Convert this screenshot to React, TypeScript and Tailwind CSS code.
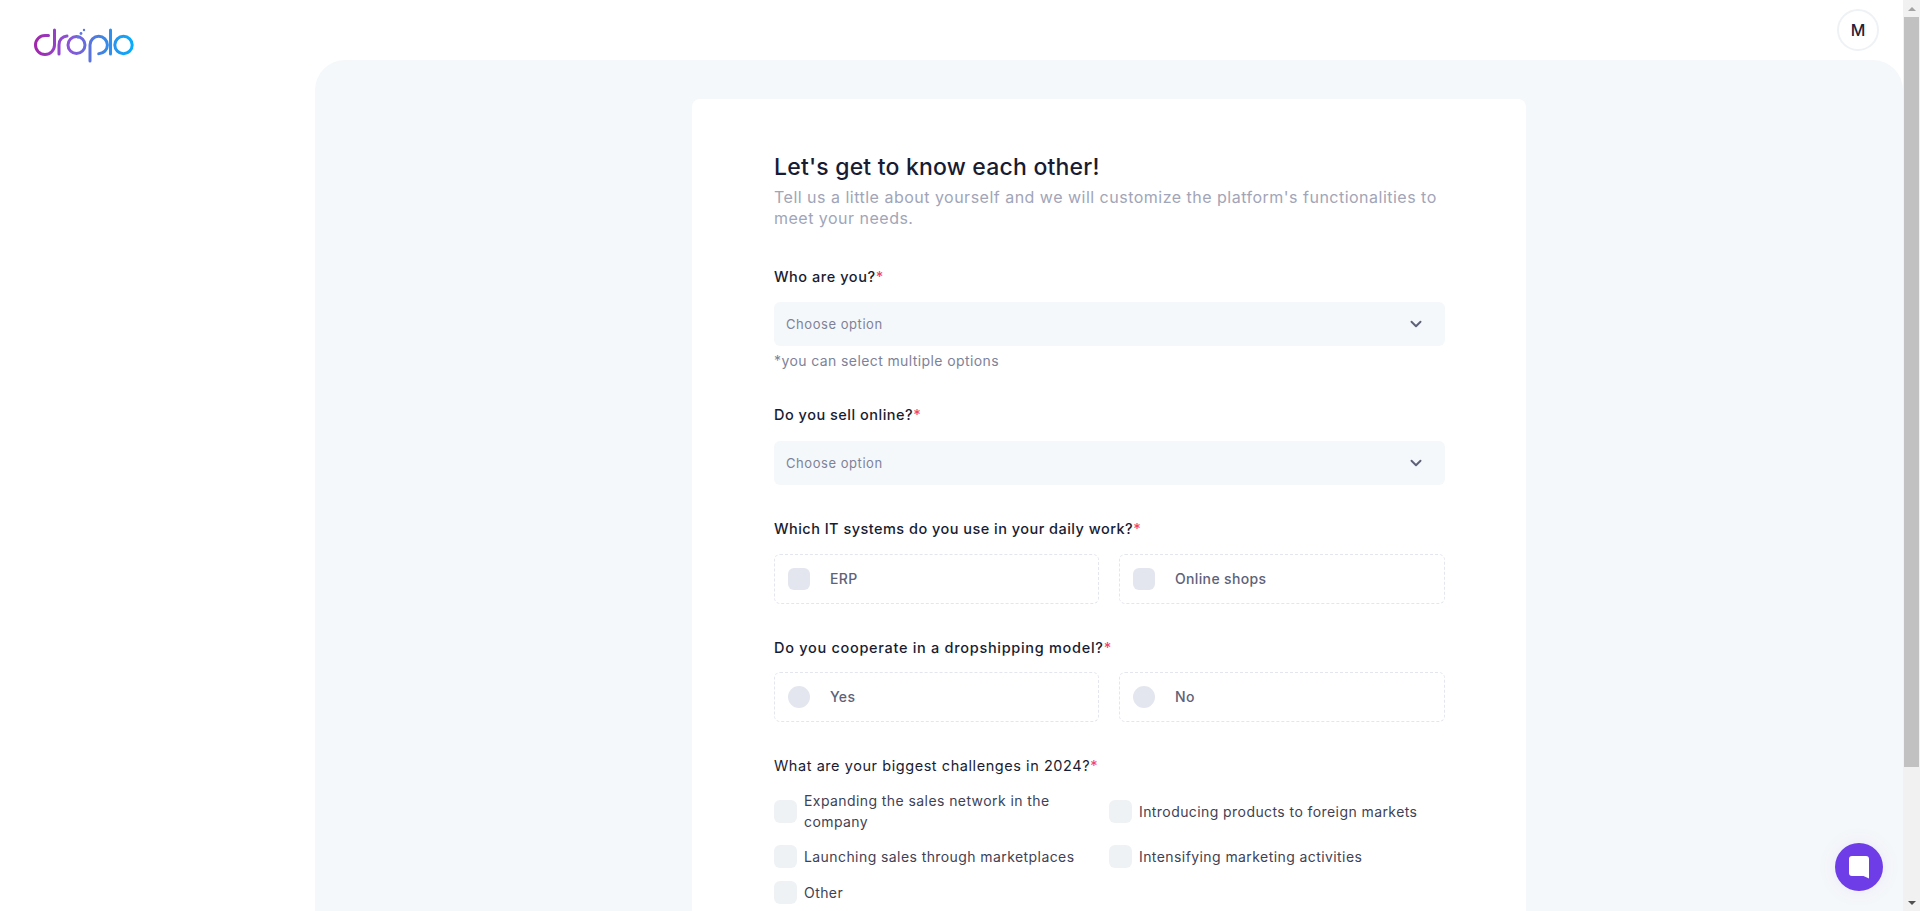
import React from "react";
import { ChevronDown } from "lucide-react";

function Logo() {
  return (
    <svg width="110" height="44" viewBox="30 24 110 44" fill="none" aria-label="droplo">
      <defs>
        <linearGradient id="lg" gradientUnits="userSpaceOnUse" x1="34" y1="0" x2="134" y2="0">
          <stop offset="0" stopColor="#a126ab" />
          <stop offset="0.35" stopColor="#8a55d8" />
          <stop offset="0.62" stopColor="#4a7ddf" />
          <stop offset="1" stopColor="#00b0ff" />
        </linearGradient>
      </defs>
      <g stroke="url(#lg)" strokeWidth="3" strokeLinecap="round">
        <path d="M53.5 30V45a9.5 9.5 0 1 1-9.5-9.5h3.5" />
        <path d="M58 54V45a8.5 8.5 0 0 1 8-9" />
        <circle cx="75.5" cy="45" r="8.5" />
        <path d="M89 61V45a8.7 8.7 0 1 1 8.7 8.7" />
        <path d="M109.5 30V54" />
        <circle cx="122.5" cy="45" r="8.7" />
      </g>
      <circle cx="83" cy="30" r="1.2" fill="#5f78e0" />
      <circle cx="80" cy="33.5" r="1.4" fill="#5f78e0" />
      <circle cx="77" cy="37" r="1.6" fill="#5f78e0" />
    </svg>
  );
}

function Label({ text, className }: { text: string; className: string }) {
  return (
    <div className={`text-[14.5px] leading-[21px] font-medium text-[#181c32] ${className}`}>
      {text}
      <span className="text-[#f1416c]">*</span>
    </div>
  );
}

function Select({ className }: { className: string }) {
  return (
    <div className={`h-[44px] rounded-[6px] bg-[#f5f8fa] pl-[12px] pr-[20px] flex items-center justify-between ${className}`}>
      <span className="mt-[1px] text-[13px] tracking-[0.55px] text-[#7e8299]">Choose option</span>
      <ChevronDown size={18} strokeWidth={2.6} className="text-[#5e6278]" />
    </div>
  );
}

function OptionBox({ text, round, className }: { text: string; round?: boolean; className: string }) {
  return (
    <div className={`h-[50px] rounded-[6px] border border-dashed border-[#e4e6ef] flex items-center pl-[13px] ${className}`}>
      <span className={`w-[22px] h-[22px] bg-[#e4e6ef] shrink-0 ${round ? "rounded-full" : "rounded-[6px]"}`} />
      <span className="ml-[20px] mb-[2px] text-[14px] tracking-[0.35px] font-medium text-[#5e6278]">{text}</span>
    </div>
  );
}

function Check({ text, className }: { text: string; className?: string }) {
  return (
    <div className={`flex items-center gap-[7px] ${className ?? ""}`}>
      <span className="w-[23px] h-[23px] rounded-[6px] bg-[#eff2f5] shrink-0" />
      <span className="text-[14px] leading-[21px] tracking-[0.42px] text-[#3f4254]">{text}</span>
    </div>
  );
}

export default function App() {
  return (
    <div className="h-[911px] w-full overflow-hidden flex bg-white font-['Inter','Liberation_Sans',sans-serif]">
      <div className="relative flex-1 min-w-0 flex flex-col">
        <header className="h-[60px] shrink-0 flex items-start justify-between pl-[31px] pr-[24px]">
          <div className="mt-[24px]">
            <Logo />
          </div>
          <div className="mt-[9px] w-[42px] h-[42px] rounded-full border-2 border-[#eff2f5] flex items-center justify-center text-[16px] font-medium text-[#1e2139]">
            M
          </div>
        </header>
        <div className="flex-1 min-h-0 ml-[315px] bg-[#f5f8fa] rounded-t-[30px] pt-[39px] flex justify-center overflow-hidden">
          <main className="w-[834px] h-[900px] shrink-0 bg-white rounded-[8px] pl-[82px] pr-[81px] pt-[53px]">
            <h1 className="text-[23px] leading-[30px] font-medium tracking-[0.2px] text-[#181c32]">Let's get to know each other!</h1>
            <p className="mt-[5px] text-[16px] leading-[21px] tracking-[0.49px] text-[#a1a5b7]">
              Tell us a little about yourself and we will customize the platform's functionalities to meet your needs.
            </p>
            <Label text="Who are you?" className="mt-[37px] tracking-[0.55px]" />
            <Select className="mt-[15px]" />
            <div className="mt-[4px] text-[14px] leading-[21px] tracking-[0.4px] text-[#7e8299]">*you can select multiple options</div>
            <Label text="Do you sell online?" className="mt-[33px] tracking-[0.5px]" />
            <Select className="mt-[16px]" />
            <Label text="Which IT systems do you use in your daily work?" className="mt-[33px] tracking-[0.47px]" />
            <div className="mt-[15px] flex gap-[20px]">
              <OptionBox text="ERP" className="w-[325px] shrink-0" />
              <OptionBox text="Online shops" className="flex-1" />
            </div>
            <Label text="Do you cooperate in a dropshipping model?" className="mt-[33px] tracking-[0.7px]" />
            <div className="mt-[14px] flex gap-[20px]">
              <OptionBox text="Yes" round className="w-[325px] shrink-0" />
              <OptionBox text="No" round className="flex-1" />
            </div>
            <div className="mt-[33px] text-[14.5px] leading-[21px] tracking-[0.56px] text-[#181c32]">
              What are your biggest challenges in 2024?<span className="text-[#f1416c]">*</span>
            </div>
            <div className="mt-[14px] grid grid-cols-[335px_1fr] gap-y-[13px]">
              <Check text="Expanding the sales network in the company" className="pr-[30px]" />
              <Check text="Introducing products to foreign markets" />
              <Check text="Launching sales through marketplaces" />
              <Check text="Intensifying marketing activities" />
              <Check text="Other" />
            </div>
          </main>
        </div>
        <button className="absolute right-[20px] top-[843px] w-[48px] h-[48px] rounded-full bg-[#6e3de8] flex items-center justify-center shadow-[0_0_20px_rgba(110,61,232,0.08)]" aria-label="Chat">
          <svg width="22" height="25" viewBox="0 0 22 25">
            <path d="M4 1h14a3 3 0 0 1 3 3v19.5L15.5 21H4a3 3 0 0 1-3-3V4a3 3 0 0 1 3-3z" fill="#fff" />
          </svg>
        </button>
      </div>
      <div className="w-[17px] shrink-0 bg-[#f1f1f1] flex flex-col items-center">
        <div className="h-[17px] shrink-0 flex items-center justify-center">
          <span className="w-0 h-0 border-x-[4px] border-x-transparent border-b-[4px] border-b-[#a3a3a3]" />
        </div>
        <div className="w-[15px] h-[750px] bg-[#c1c1c1]" />
        <div className="flex-1" />
        <div className="h-[17px] shrink-0 flex items-center justify-center">
          <span className="w-0 h-0 border-x-[4px] border-x-transparent border-t-[4px] border-t-[#505050]" />
        </div>
      </div>
    </div>
  );
}
